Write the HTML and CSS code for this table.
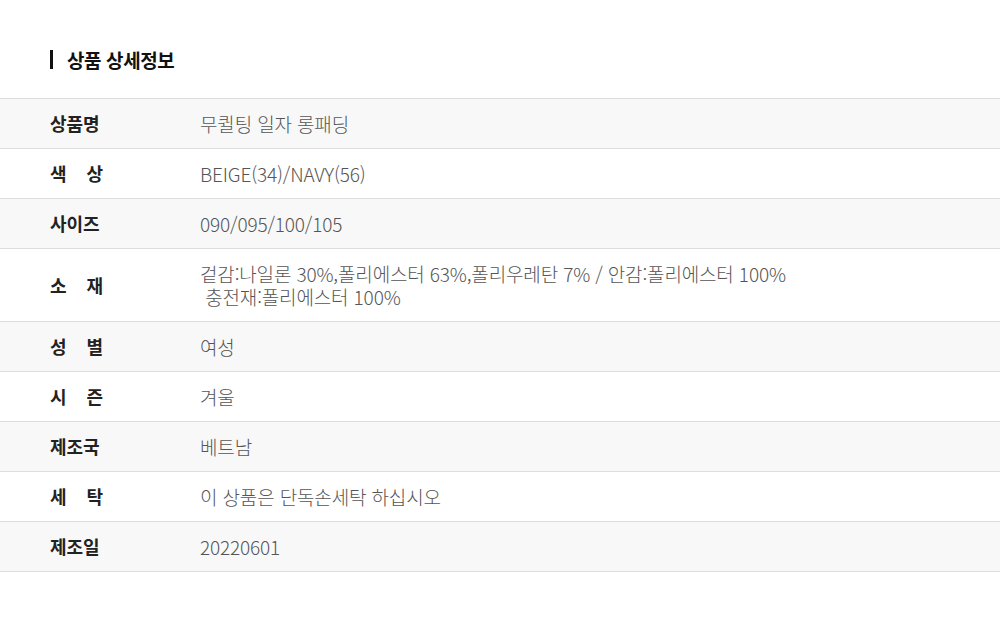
FILE: index.html
```html
<!DOCTYPE html>
<html lang="ko">
<head>
    <meta charset="UTF-8">
    <meta name="viewport" content="width=device-width, initial-scale=1.0">
    <title>상품 상세정보</title>
    <link rel="stylesheet" href="styles.css">
</head>
<body>

<div class="detail">
    <h2 class="detailTitle">상품 상세정보</h2>
    <table class="infoTable">
        <tr>
            <th><span class="label">상품명</span></th>
            <td>무퀼팅 일자 롱패딩</td>
        </tr>
        <tr>
            <th><span class="label">색 상</span></th>
            <td>BEIGE(34)/NAVY(56)</td>
        </tr>
        <tr>
            <th><span class="label">사이즈</span></th>
            <td>090/095/100/105</td>
        </tr>
        <tr>
            <th><span class="label">소 재</span></th>
            <td>겉감:나일론 30%,폴리에스터 63%,폴리우레탄 7% / 안감:폴리에스터 100%<br>&nbsp;충전재:폴리에스터 100%</td>
        </tr>
        <tr>
            <th><span class="label">성 별</span></th>
            <td>여성</td>
        </tr>
        <tr>
            <th><span class="label">시 즌</span></th>
            <td>겨울</td>
        </tr>
        <tr>
            <th><span class="label">제조국</span></th>
            <td>베트남</td>
        </tr>
        <tr>
            <th><span class="label">세 탁</span></th>
            <td>이 상품은 단독손세탁 하십시오</td>
        </tr>
        <tr>
            <th><span class="label">제조일</span></th>
            <td>20220601</td>
        </tr>
    </table>
</div>

</body>
</html>
```

FILE: styles.css
```css
body {
    margin: 0;
    background: #fff;
    font-family: "Noto Sans CJK KR", "Noto Sans", sans-serif;
    color: #222;
}
.detail {
    padding-top: 50px;
}
.detailTitle {
    margin: 0 0 29px 50px;
    padding-left: 14px;
    border-left: 3px solid #111;
    font-size: 19px;
    font-weight: 700;
    line-height: 19px;
    height: 19px;
    letter-spacing: -0.4px;
    color: #111;
}
.infoTable {
    width: 100%;
    border-collapse: collapse;
    border-top: 1px solid #ddd;
}
.infoTable tr {
    border-bottom: 1px solid #ddd;
}
.infoTable tr:nth-child(odd) {
    background: #f8f8f8;
}
.infoTable th,
.infoTable td {
    padding: 13px 0;
    line-height: 23px;
    text-align: left;
    vertical-align: middle;
}
.infoTable th {
    width: 150px;
    padding-left: 50px;
    font-size: 18px;
    font-weight: 700;
    color: #222;
}
.label {
    display: inline-block;
    width: 53px;
    text-align: justify;
    text-align-last: justify;
}
.infoTable td {
    font-size: 19px;
    font-weight: 300;
    color: #555;
    letter-spacing: -0.15px;
}
```
